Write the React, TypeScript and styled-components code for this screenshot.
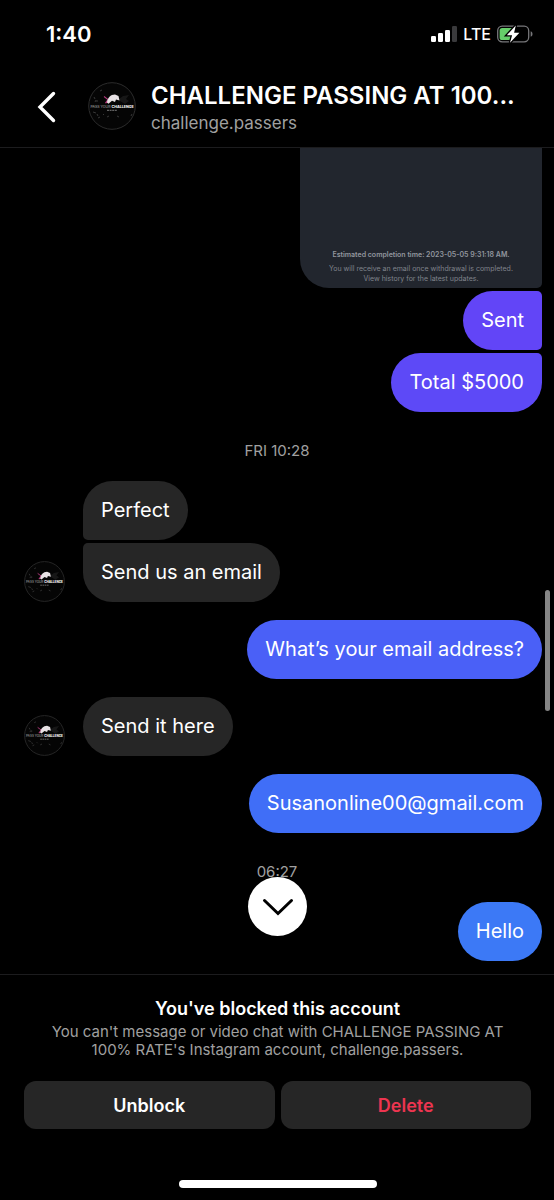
import React from "react";
import styled, { createGlobalStyle } from "styled-components";

const GlobalStyle = createGlobalStyle`
  *, *::before, *::after { box-sizing: border-box; }
  body {
    margin: 0;
    background: #000;
    color: #fff;
    font-family: Inter, "Liberation Sans", sans-serif;
  }
  h1, h2, p { margin: 0; padding: 0; }
  button { font-family: inherit; border: 0; cursor: pointer; }
`;

const Screen = styled.div`
  display: flex;
  flex-direction: column;
  min-height: 100vh;
  background: #000;
`;

const StatusBar = styled.div`
  display: flex;
  align-items: center;
  justify-content: space-between;
  height: 68px;
  padding: 0 21px 0 46px;
`;

const Clock = styled.time`
  font-size: 22px;
  line-height: 24px;
  font-weight: 600;
`;

const StatusIcons = styled.div`
  display: flex;
  align-items: center;
  gap: 6px;
`;

const Network = styled.span`
  font-size: 16px;
  line-height: 24px;
  font-weight: 500;
`;

const Header = styled.header`
  display: flex;
  align-items: center;
  height: 80px;
  padding: 0 24px 4px 32px;
  border-bottom: 1px solid #1c1c1e;
`;

const BackButton = styled.button`
  display: flex;
  padding: 0;
  margin-right: 26px;
  background: none;
  color: #fff;
`;

const Account = styled.div`
  flex: 1;
  min-width: 0;
  margin-left: 15px;
  padding-top: 4px;
`;

const AccountName = styled.h1`
  font-size: 24px;
  line-height: 30px;
  font-weight: 600;
  white-space: nowrap;
`;

const Handle = styled.p`
  font-size: 17px;
  line-height: 24px;
  color: #a0a0a0;
`;

const ThreadFrame = styled.main`
  position: relative;
  display: flex;
  flex: 1;
`;

const Thread = styled.div`
  display: flex;
  flex: 1;
  flex-direction: column;
  gap: 18px;
  padding: 0 12px 13px 24px;
`;

const Group = styled.div<{ $grow?: boolean }>`
  display: flex;
  flex-direction: column;
  align-items: flex-end;
  gap: 3px;
  flex: ${(p) => (p.$grow ? "1 0 auto" : "0 0 auto")};
`;

const ReceivedGroup = styled.div`
  display: flex;
  align-items: flex-end;
  gap: 18px;
`;

const ReceivedStack = styled.div`
  display: flex;
  flex-direction: column;
  align-items: flex-start;
  gap: 3px;
`;

const Bubble = styled.p<{ $color?: string; $radius?: string }>`
  padding: 15px 18px 16px;
  border-radius: ${(p) => p.$radius ?? "30px"};
  background: ${(p) => p.$color ?? "#262626"};
  font-size: 20px;
  line-height: 28px;
`;

const SharedImage = styled.div`
  display: flex;
  flex: 1 0 139px;
  flex-direction: column;
  justify-content: flex-end;
  width: 242px;
  padding-bottom: 4px;
  border-radius: 0 0 5px 29px;
  background: #22262e;
  color: #80848c;
  font-size: 7px;
  line-height: 10px;
  text-align: center;
`;

const Estimate = styled.p`
  margin-bottom: 4px;
  font-weight: 600;
  color: #92969e;
`;

const Timestamp = styled.time`
  margin: 12px 12px 3px 0;
  font-size: 15px;
  line-height: 18px;
  color: #a0a0a0;
  text-align: center;
`;

const JumpButton = styled.button`
  position: absolute;
  bottom: 38px;
  left: 50%;
  display: flex;
  align-items: center;
  justify-content: center;
  width: 59px;
  height: 59px;
  margin-left: -29px;
  padding: 0;
  border-radius: 50%;
  background: #fff;
  color: #000;
`;

const ScrollThumb = styled.div`
  position: absolute;
  top: 442px;
  right: 4px;
  width: 5px;
  height: 121px;
  border-radius: 3px;
  background: #858585;
`;

const Footer = styled.footer`
  display: flex;
  flex-direction: column;
  align-items: center;
  padding: 22px 23px 12px 24px;
  border-top: 1px solid #1c1c1e;
  text-align: center;
`;

const BlockedTitle = styled.h2`
  margin-bottom: 2px;
  font-size: 18px;
  line-height: 24px;
  font-weight: 600;
`;

const BlockedText = styled.p`
  max-width: 470px;
  font-size: 15px;
  line-height: 18px;
  color: #a0a0a0;
`;

const Actions = styled.div`
  display: flex;
  gap: 6px;
  width: 100%;
  margin: 22px 0 51px;
`;

const ActionButton = styled.button<{ $danger?: boolean }>`
  flex: 1;
  height: 48px;
  border-radius: 12px;
  background: #262626;
  color: ${(p) => (p.$danger ? "#ed3550" : "#fff")};
  font-size: 18px;
  font-weight: 600;
`;

const HomeIndicator = styled.div`
  width: 198px;
  height: 8px;
  border-radius: 4px;
  background: #fff;
`;

const AvatarArt = styled.svg`
  flex: none;
`;

function Avatar({ size }: { size: number }) {
  return (
    <AvatarArt width={size} height={size} viewBox="0 0 48 48" role="img" aria-label="challenge.passers">
      <circle cx="24" cy="24" r="23.3" fill="#050505" stroke="#2c2c2c" strokeWidth="1" />
      <path d="M31 17l4-3 6-1-3 4 3 2-4 3-5-3z" fill="#171717" />
      <path d="M6 15l1 2M9 18v2M12 9l2-1M5 30l3 1M10 36l2-1M15 32l1 1M19 35l2-1M29 34l2 1M43 34l1-2M9 32l1 2M7 20l1-2" fill="none" stroke="#444" strokeWidth=".8" />
      <path d="M16 14.500l4 3-2.500 3.500 4-2 2-4" fill="none" stroke="#b43a7c" strokeWidth="1.100" />
      <path d="M19 20.500c.5-4.500 3.500-8 8-8l3.500 1.500 1 4.500-3.500-1-1 2.500-3-1.200-3.500 3z" fill="#e8e2e5" />
      <text x="24" y="26.2" textAnchor="middle" fontSize="3.6" fill="#b5b5b5" fontFamily="Inter, sans-serif">
        PASS YOUR <tspan fontWeight="800" fill="#f4f4f4">CHALLENGE</tspan>
      </text>
      <path d="M19 28.300h10" stroke="#777" strokeWidth="1" strokeDasharray="2 .6" />
    </AvatarArt>
  );
}

function Signal() {
  return (
    <svg width="26" height="16" viewBox="0 0 26 16" aria-hidden="true">
      <rect x="0" y="10" width="5" height="6" rx="1.2" fill="#fff" />
      <rect x="7" y="7" width="5" height="9" rx="1.2" fill="#fff" />
      <rect x="14" y="4" width="5" height="12" rx="1.2" fill="#fff" />
      <rect x="21" y="0" width="5" height="16" rx="1.2" fill="#3a3a3c" />
    </svg>
  );
}

function Battery() {
  return (
    <svg width="36" height="18" viewBox="0 0 36 18" aria-hidden="true">
      <rect x=".7" y="1.2" width="31" height="15.6" rx="4.5" fill="none" stroke="#77777a" strokeWidth="1.3" />
      <path d="M33.7 6.2c2.4.8 2.4 4.8 0 5.6z" fill="#77777a" />
      <path d="M5.2 3H15v12H5.2A2.6 2.6 0 0 1 2.6 12.4V5.6A2.6 2.6 0 0 1 5.2 3z" fill="#66ce6a" />
      <path d="M18.800.4L9.800 10.200h5.300L13 17.800l9.400-10h-5.300z" fill="#fff" stroke="#000" strokeWidth="2.6" paintOrder="stroke" />
    </svg>
  );
}

export default function App() {
  return (
    <>
      <GlobalStyle />
      <Screen>
        <StatusBar>
          <Clock>1:40</Clock>
          <StatusIcons>
            <Signal />
            <Network>LTE</Network>
            <Battery />
          </StatusIcons>
        </StatusBar>

        <Header>
          <BackButton aria-label="Back">
            <svg width="30" height="36" viewBox="0 0 30 36" fill="none" stroke="currentColor" strokeWidth="3.4" strokeLinecap="round" strokeLinejoin="miter">
              <path d="M21.5 5.500L8 19 21.500 32.500" />
            </svg>
          </BackButton>
          <Avatar size={48} />
          <Account>
            <AccountName>CHALLENGE PASSING AT 100...</AccountName>
            <Handle>challenge.passers</Handle>
          </Account>
        </Header>

        <ThreadFrame>
          <Thread>
            <Group $grow>
              <SharedImage>
                <Estimate>Estimated completion time: 2023-05-05 9:31:18 AM.</Estimate>
                <p>
                  You will receive an email once withdrawal is completed.
                  <br />
                  View history for the latest updates.
                </p>
              </SharedImage>
              <Bubble $color="#6245f7" $radius="30px 5px 5px 30px">Sent</Bubble>
              <Bubble $color="#5d49f7" $radius="30px 5px 30px 30px">Total $5000</Bubble>
            </Group>

            <Timestamp>FRI 10:28</Timestamp>

            <ReceivedGroup>
              <Avatar size={41} />
              <ReceivedStack>
                <Bubble $radius="30px 30px 30px 5px">Perfect</Bubble>
                <Bubble $radius="5px 30px 30px 30px">Send us an email</Bubble>
              </ReceivedStack>
            </ReceivedGroup>

            <Group>
              <Bubble $color="#4a60f7">What’s your email address?</Bubble>
            </Group>

            <ReceivedGroup>
              <Avatar size={41} />
              <ReceivedStack>
                <Bubble>Send it here</Bubble>
              </ReceivedStack>
            </ReceivedGroup>

            <Group>
              <Bubble $color="#406ef7">Susanonline00@gmail.com</Bubble>
            </Group>

            <Timestamp>06:27</Timestamp>

            <Group>
              <Bubble $color="#3c79f6">Hello</Bubble>
            </Group>
          </Thread>
          <JumpButton aria-label="Scroll to latest message">
            <svg width="34" height="22" viewBox="0 0 34 22" fill="none" stroke="currentColor" strokeWidth="3" strokeLinecap="round">
              <path d="M3.5 4.5L17 17.5 30.5 4.5" />
            </svg>
          </JumpButton>
          <ScrollThumb />
        </ThreadFrame>

        <Footer>
          <BlockedTitle>You've blocked this account</BlockedTitle>
          <BlockedText>
            You can't message or video chat with CHALLENGE PASSING AT 100% RATE's Instagram account, challenge.passers.
          </BlockedText>
          <Actions>
            <ActionButton>Unblock</ActionButton>
            <ActionButton $danger>Delete</ActionButton>
          </Actions>
          <HomeIndicator />
        </Footer>
      </Screen>
    </>
  );
}
